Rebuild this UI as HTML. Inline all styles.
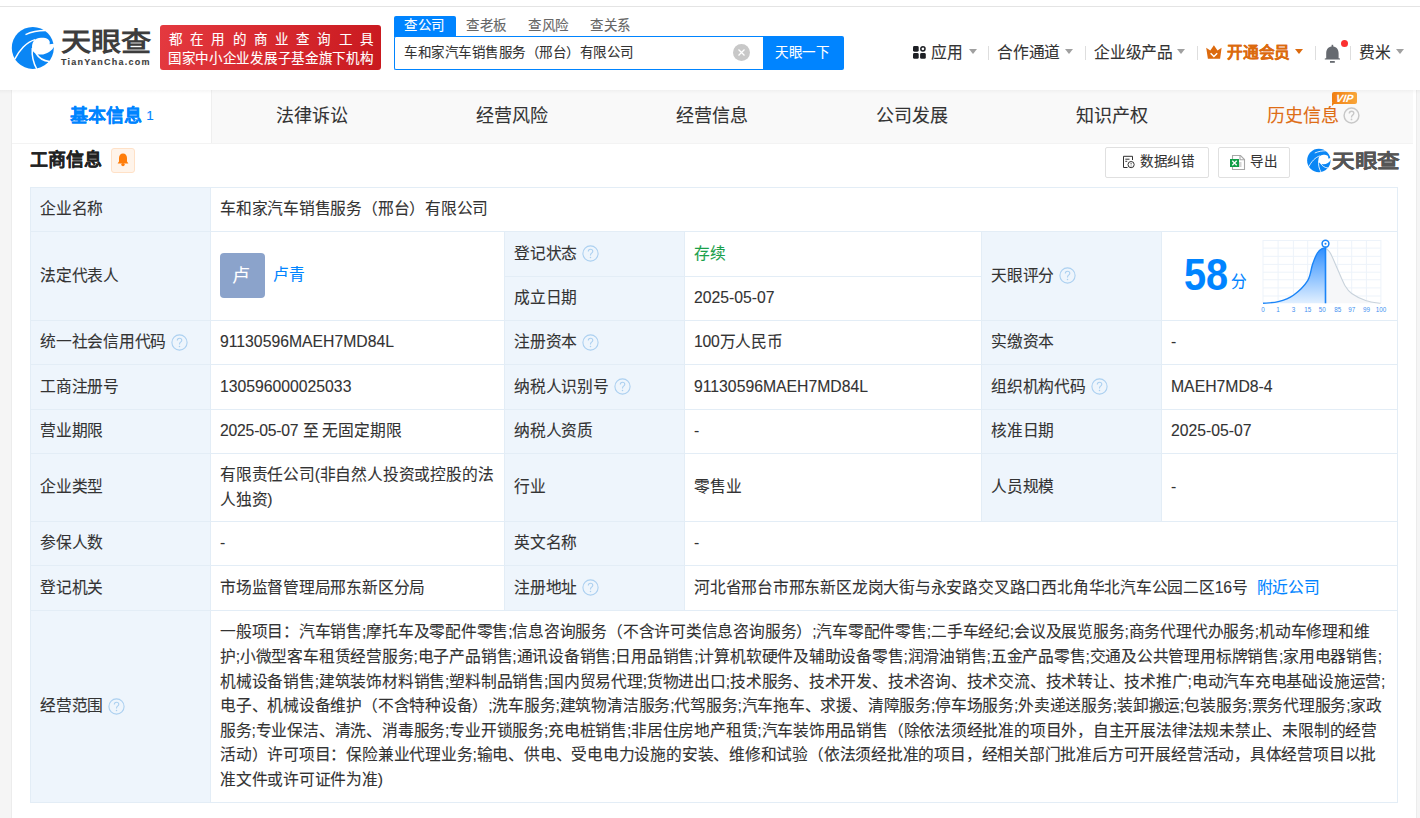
<!DOCTYPE html>
<html lang="zh-CN"><head><meta charset="utf-8">
<style>
*{margin:0;padding:0;box-sizing:border-box}
html,body{width:1420px;height:818px;overflow:hidden}
body{-webkit-text-stroke:0.1px currentColor;background:#f5f5f5;font-family:"Liberation Sans",sans-serif;color:#333;position:relative}
.a{position:absolute}
.nw{white-space:nowrap}
#hdr{left:0;top:0;width:1420px;height:90px;background:#fff}
#topline{left:0;top:6px;width:1420px;height:1px;background:#e4e4e4}
#card{left:12px;top:90px;width:1404px;height:728px;background:#fff}
#tabs{left:12px;top:90px;width:1401px;height:54px;background:#f9f9f9;border-bottom:1px solid #f3f3f3}
.tab{top:90px;height:53px;width:200px;text-align:center;font-size:18px;line-height:53px;color:#333;white-space:nowrap}
.nav{font-size:15.75px;letter-spacing:-0.25px;color:#333;line-height:20px;top:43px;white-space:nowrap}
.tri{width:0;height:0;border-left:4.5px solid transparent;border-right:4.5px solid transparent;border-top:5px solid #a0a0a0}
.sep{width:1px;height:14px;background:#dedede;top:46px}
.lb{background:#eef5fc}
.c{position:absolute;display:flex;align-items:center;padding-left:10px;font-size:15.75px;line-height:24.6px;letter-spacing:-0.22px;color:#333;white-space:nowrap}
.hl{position:absolute;height:1px;background:#e3edf6}
.vl{position:absolute;width:1px;background:#e3edf6}
.q{width:17px;height:17px;margin-left:5px;flex:none;color:#acd0f0;position:relative;top:-0.5px}
</style></head><body>
<svg width="0" height="0" style="position:absolute">
 <defs>
  <symbol id="qi" viewBox="0 0 17 17">
   <circle cx="8.5" cy="8.5" r="7.6" fill="none" stroke="currentColor" stroke-width="1.1"/>
   <path d="M6.3 6.6 C6.3 5.1 7.3 4.3 8.5 4.3 C9.8 4.3 10.8 5.1 10.8 6.3 C10.8 7.5 9.9 7.9 9.2 8.5 C8.7 8.9 8.5 9.3 8.5 10.4" fill="none" stroke="currentColor" stroke-width="1.1"/>
   <circle cx="8.5" cy="12.4" r="0.75" fill="currentColor"/>
  </symbol>
  <symbol id="qi2" viewBox="0 0 17 17">
   <circle cx="8.5" cy="8.5" r="7.4" fill="none" stroke="currentColor" stroke-width="1.5"/>
   <path d="M6.3 6.6 C6.3 5.1 7.3 4.3 8.5 4.3 C9.8 4.3 10.8 5.1 10.8 6.3 C10.8 7.5 9.9 7.9 9.2 8.5 C8.7 8.9 8.5 9.3 8.5 10.4" fill="none" stroke="currentColor" stroke-width="1.4"/>
   <circle cx="8.5" cy="12.4" r="0.9" fill="currentColor"/>
  </symbol>
  <symbol id="logo" viewBox="0 0 52 52">
   <circle cx="24.8" cy="25.9" r="21" fill="#0a86f5"/>
   <path d="M17.5 12.6 C24 9.6 31 8.6 37.5 8.6" stroke="#fff" stroke-width="1.5" fill="none"/>
   <path d="M41.6 22.2 C42.8 17.5 38.5 15.6 33 15.8 C27 16 24 19.5 24 25 C24 30.5 28 32.8 33 32.6 C39 32.4 44 29 46.5 24 L47.5 21.6 L41.6 22.2 Z" fill="#fff"/>
   <path d="M6.8 37.2 C11 28.5 18.5 20 27 17.6" stroke="#fff" stroke-width="1.5" fill="none"/>
   <path d="M24.3 26 C23.6 34 25.3 41 29 47.5" stroke="#fff" stroke-width="1.5" fill="none"/>
   <path d="M27.8 31 C30.8 36 35.5 39 41.5 39.5" stroke="#fff" stroke-width="1.5" fill="none"/>
  </symbol>
 </defs>
</svg>
<div class="a" id="hdr"></div>
<div class="a" id="topline"></div>

<!-- logo -->
<svg class="a" style="left:8px;top:22px" width="52" height="52"><use href="#logo"/></svg>
<div class="a nw" style="left:61px;top:26px;font-size:26px;font-weight:bold;color:#3d3d3d;line-height:32px;-webkit-text-stroke:0;transform:scaleX(1.16);transform-origin:0 0">天眼查</div>
<div class="a nw" style="left:61px;top:56px;font-size:9px;font-weight:bold;color:#3d3d3d;line-height:12px;letter-spacing:1.25px">TianYanCha.com</div>

<!-- red banner -->
<div class="a" style="left:160px;top:25px;width:221px;height:45px;border-radius:3px;background:linear-gradient(100deg,#e4393f,#c9191f)"></div>
<div class="a nw" style="left:169px;top:31px;font-size:13.5px;color:#fff;line-height:18px;letter-spacing:8.2px">都在用的商业查询工具</div>
<div class="a nw" style="left:168px;top:50px;font-size:13.5px;letter-spacing:0.7px;color:#fff;line-height:18px">国家中小企业发展子基金旗下机构</div>

<!-- search -->
<div class="a" style="left:394px;top:16px;width:62px;height:21px;background:#0084ff;border-radius:2px 2px 0 0"></div>
<div class="a nw" style="left:404px;top:16px;font-size:13.5px;letter-spacing:0.5px;color:#fff;line-height:20px">查公司</div>
<div class="a nw" style="left:466px;top:16px;font-size:13.5px;letter-spacing:0.5px;color:#666;line-height:20px">查老板</div>
<div class="a nw" style="left:528px;top:16px;font-size:13.5px;letter-spacing:0.5px;color:#666;line-height:20px">查风险</div>
<div class="a nw" style="left:590px;top:16px;font-size:13.5px;letter-spacing:0.5px;color:#666;line-height:20px">查关系</div>
<div class="a" style="left:394px;top:36px;width:370px;height:34px;border:1px solid #0084ff;border-right:none;background:#fff;border-radius:2px 0 0 2px"></div>
<div class="a nw" style="left:404px;top:43px;font-size:13.5px;letter-spacing:0.5px;color:#333;line-height:20px">车和家汽车销售服务（邢台）有限公司</div>
<div class="a" style="left:733px;top:44px;width:17px;height:17px;border-radius:50%;background:#c8c8c8"></div>
<svg class="a" style="left:733px;top:44px" width="17" height="17"><path d="M5.5 5.5 L11.5 11.5 M11.5 5.5 L5.5 11.5" stroke="#fff" stroke-width="1.3"/></svg>
<div class="a" style="left:763px;top:36px;width:81px;height:34px;background:#0084ff;border-radius:0 2px 2px 0"></div>
<div class="a nw" style="left:775px;top:43px;font-size:13.5px;letter-spacing:0.5px;color:#fff;line-height:20px">天眼一下</div>

<!-- right nav -->
<svg class="a" style="left:913px;top:46px" width="14" height="14" viewBox="0 0 14 14">
  <rect x="0" y="0" width="5.7" height="5.7" rx="1.4" fill="#1d1f24"/>
  <circle cx="9.9" cy="2.85" r="2.1" stroke="#1d1f24" stroke-width="1.5" fill="none"/>
  <rect x="0" y="7.1" width="5.7" height="5.7" rx="1.4" fill="#1d1f24"/>
  <rect x="7.1" y="7.1" width="5.7" height="5.7" rx="1.4" fill="#1d1f24"/>
</svg>
<div class="a nav" style="left:931px">应用</div>
<div class="a tri" style="left:969px;top:49px"></div>
<div class="a sep" style="left:988px"></div>
<div class="a nav" style="left:997px">合作通道</div>
<div class="a tri" style="left:1065px;top:49px"></div>
<div class="a sep" style="left:1085px"></div>
<div class="a nav" style="left:1094px">企业级产品</div>
<div class="a tri" style="left:1177px;top:49px"></div>
<div class="a sep" style="left:1197px"></div>
<svg class="a" style="left:1206px;top:45px" width="17" height="15" viewBox="0 0 17 15">
  <path d="M0.2 2.8 L4.3 5.6 L7.9 0.3 L11.5 5.6 L15.6 2.8 L14.1 13.8 L1.9 13.8 Z" fill="#dc6a0e"/>
  <path d="M4.6 8.3 L7.9 11.5 L11.2 8.3" stroke="#fff" stroke-width="1.5" fill="none"/>
</svg>
<div class="a nav" style="left:1227px;color:#dc6a0e;font-weight:bold">开通会员</div>
<div class="a tri" style="left:1295px;top:49px;border-top-color:#dc6a0e"></div>
<div class="a sep" style="left:1315px"></div>
<svg class="a" style="left:1324px;top:44px" width="17" height="20" viewBox="0 0 17 20">
  <rect x="7.6" y="0.8" width="1.6" height="2.5" fill="#666a70"/>
  <path d="M8.4 2.6 C4.6 2.6 2.2 5.2 2.2 9.3 L2.2 14.2 L0.8 14.4 L0.8 15.4 L16 15.4 L16 14.4 L14.6 14.2 L14.6 9.3 C14.6 5.2 12.2 2.6 8.4 2.6 Z" fill="#666a70"/>
  <rect x="6" y="17" width="4.8" height="1.8" fill="#666a70"/>
</svg>
<div class="a" style="left:1341px;top:40px;width:7px;height:7px;border-radius:50%;background:#fb3030"></div>
<div class="a sep" style="left:1350px"></div>
<div class="a nav" style="left:1359px">费米</div>
<div class="a tri" style="left:1396px;top:49px"></div>

<!-- card & tabs -->
<div class="a" id="card"></div>
<div class="a" id="tabs"></div>
<div class="a" style="left:11px;top:90px;width:1px;height:728px;background:#ececec"></div>
<div class="a" style="left:1416px;top:90px;width:1px;height:728px;background:#ececec"></div>
<div class="a" style="left:12px;top:90px;width:199px;height:53px;background:#fff"></div>
<div class="a" style="left:211px;top:90px;width:1px;height:53px;background:#efefef"></div>
<div class="a" style="left:0;top:90px;width:1420px;height:4px;background:linear-gradient(rgba(0,0,0,0.035),rgba(0,0,0,0))"></div>
<div class="a tab" style="left:12px;color:#0084ff;font-weight:bold">基本信息<span style="font-size:13.5px;font-weight:normal;margin-left:4px;position:relative;top:-2px">1</span></div>
<div class="a tab" style="left:212px">法律诉讼</div>
<div class="a tab" style="left:412px">经营风险</div>
<div class="a tab" style="left:612px">经营信息</div>
<div class="a tab" style="left:812px">公司发展</div>
<div class="a tab" style="left:1012px">知识产权</div>
<div class="a nw" style="left:1267px;top:104px;font-size:18px;line-height:24px;color:#de6d16">历史信息</div>
<svg class="a" style="left:1343px;top:107px;color:#c8c8c8" width="17" height="17"><use href="#qi2"/></svg>
<div class="a" style="left:1332px;top:92px;width:25px;height:12px;border-radius:2px;background:linear-gradient(90deg,#f07f12,#f9a63a)"></div>
<div class="a" style="left:1332px;top:103px;width:0;height:0;border-top:3px solid #f07f12;border-right:3px solid transparent"></div>
<div class="a nw" style="left:1336px;top:91px;font-size:10.5px;font-style:italic;font-weight:bold;color:#fff;line-height:14px;letter-spacing:0.2px;transform:skewX(-8deg)">VIP</div>

<!-- section title -->
<div class="a nw" style="left:30px;top:148px;font-size:18px;font-weight:bold;color:#222;line-height:24px">工商信息</div>
<div class="a" style="left:111px;top:148px;width:24px;height:25px;border-radius:3px;background:#fff4ea;border:1px solid #ffe1c7"></div>
<svg class="a" style="left:116px;top:152px" width="14" height="15" viewBox="0 0 14 15">
  <path d="M7 1.5 C4.6 1.5 3 3.4 3 6 L3 9.6 L1.6 11.6 L12.4 11.6 L11 9.6 L11 6 C11 3.4 9.4 1.5 7 1.5 Z" fill="#ff7d0a"/>
  <circle cx="7" cy="12.6" r="1.7" fill="#ff7d0a"/>
</svg>

<div class="a" style="left:1105px;top:147px;width:104px;height:31px;border:1px solid #e0e0e0;border-radius:2px;background:#fff"></div>
<svg class="a" style="left:1122px;top:155px" width="14" height="14" viewBox="0 0 14 14">
  <path d="M5.5 12.5 L1.5 12.5 L1.5 1.3 L10.5 1.3 L10.5 5" stroke="#333" stroke-width="1" fill="none"/>
  <path d="M3.3 4.2 L7.5 4.2 M3.3 6.3 L5.2 6.3" stroke="#333" stroke-width="1"/>
  <circle cx="9.1" cy="9.6" r="3.1" stroke="#333" stroke-width="1" fill="#fff"/>
  <path d="M9.1 7.9 L9.1 9.4 M9.1 10.6 L9.1 11.4" stroke="#333" stroke-width="0.9"/>
</svg>
<div class="a nw" style="left:1140px;top:152px;font-size:13.5px;letter-spacing:0.5px;line-height:20px;color:#333">数据纠错</div>
<div class="a" style="left:1218px;top:147px;width:72px;height:31px;border:1px solid #e0e0e0;border-radius:2px;background:#fff"></div>
<svg class="a" style="left:1229px;top:154px" width="17" height="17" viewBox="0 0 17 17">
  <path d="M3.5 1.5 L11.5 1.5 L15.5 5.5 L15.5 15.5 L3.5 15.5 Z" fill="#fff" stroke="#a8a8a8" stroke-width="1.1"/>
  <path d="M11 1.5 L11 5.8 L15.5 5.8" fill="none" stroke="#a8a8a8" stroke-width="1.1"/>
  <rect x="10" y="8" width="2.5" height="5" fill="#d4d4d4"/>
  <rect x="1" y="5" width="9" height="8" fill="#0f9d46"/>
  <path d="M3.3 6.8 L7.7 11.2 M7.7 6.8 L3.3 11.2" stroke="#fff" stroke-width="1.3"/>
</svg>
<div class="a nw" style="left:1250px;top:152px;font-size:13.5px;letter-spacing:0.5px;line-height:20px;color:#333">导出</div>
<svg class="a" style="left:1305px;top:146px" width="29" height="29" viewBox="0 0 52 52"><use href="#logo"/></svg>
<div class="a nw" style="left:1332px;top:149px;font-size:19px;font-weight:bold;color:#555;line-height:26px;transform:scaleX(1.19);transform-origin:0 0">天眼查</div>

<!-- TABLE -->
<div class="a lb" style="left:30px;top:187px;width:180px;height:615px"></div>
<div class="a lb" style="left:504px;top:231px;width:180px;height:379px"></div>
<div class="a lb" style="left:981px;top:231px;width:180px;height:290px"></div>

<div class="hl" style="left:30px;top:187px;width:1368px"></div>
<div class="hl" style="left:30px;top:231px;width:1368px"></div>
<div class="hl" style="left:504px;top:276px;width:477px"></div>
<div class="hl" style="left:30px;top:320px;width:1368px"></div>
<div class="hl" style="left:30px;top:364px;width:1368px"></div>
<div class="hl" style="left:30px;top:409px;width:1368px"></div>
<div class="hl" style="left:30px;top:453px;width:1368px"></div>
<div class="hl" style="left:30px;top:521px;width:1368px"></div>
<div class="hl" style="left:30px;top:565px;width:1368px"></div>
<div class="hl" style="left:30px;top:610px;width:1368px"></div>
<div class="hl" style="left:30px;top:802px;width:1368px"></div>
<div class="vl" style="left:30px;top:187px;height:616px"></div>
<div class="vl" style="left:210px;top:187px;height:616px"></div>
<div class="vl" style="left:504px;top:231px;height:379px"></div>
<div class="vl" style="left:684px;top:231px;height:379px"></div>
<div class="vl" style="left:981px;top:231px;height:290px"></div>
<div class="vl" style="left:1161px;top:231px;height:290px"></div>
<div class="vl" style="left:1397px;top:187px;height:616px"></div>

<div style="color:#acd0f0">
<!-- row1 -->
<div class="c" style="left:30px;top:187px;width:180px;height:45px">企业名称</div>
<div class="c" style="left:210px;top:187px;width:1187px;height:45px">车和家汽车销售服务（邢台）有限公司</div>
<!-- row2 -->
<div class="c" style="left:30px;top:231px;width:180px;height:90px">法定代表人</div>
<div class="a" style="left:220px;top:253px;width:45px;height:45px;border-radius:4px;background:#8ba3cb;color:#fff;font-size:18px;line-height:47px;text-align:center;text-indent:-3px">卢</div>
<div class="a nw" style="left:273px;top:263px;font-size:15.75px;letter-spacing:-0.25px;line-height:24px;color:#0084ff">卢青</div>
<div class="c" style="left:504px;top:231px;width:180px;height:46px">登记状态<svg class="q"><use href="#qi"/></svg></div>
<div class="c" style="left:684px;top:231px;width:297px;height:46px;color:#1aa04a">存续</div>
<div class="c" style="left:504px;top:276px;width:180px;height:45px">成立日期</div>
<div class="c" style="left:684px;top:276px;width:297px;height:45px;letter-spacing:0">2025-05-07</div>
<div class="c" style="left:981px;top:231px;width:180px;height:90px">天眼评分<svg class="q"><use href="#qi"/></svg></div>
<!-- row3 -->
<div class="c" style="left:30px;top:320px;width:180px;height:45px">统一社会信用代码<svg class="q"><use href="#qi"/></svg></div>
<div class="c" style="left:210px;top:320px;width:294px;height:45px;letter-spacing:0">91130596MAEH7MD84L</div>
<div class="c" style="left:504px;top:320px;width:180px;height:45px">注册资本<svg class="q"><use href="#qi"/></svg></div>
<div class="c" style="left:684px;top:320px;width:297px;height:45px">100万人民币</div>
<div class="c" style="left:981px;top:320px;width:180px;height:45px">实缴资本</div>
<div class="c" style="left:1161px;top:320px;width:236px;height:45px">-</div>
<!-- row4 -->
<div class="c" style="left:30px;top:364px;width:180px;height:46px">工商注册号</div>
<div class="c" style="left:210px;top:364px;width:294px;height:46px;letter-spacing:0">130596000025033</div>
<div class="c" style="left:504px;top:364px;width:180px;height:46px">纳税人识别号<svg class="q"><use href="#qi"/></svg></div>
<div class="c" style="left:684px;top:364px;width:297px;height:46px;letter-spacing:0">91130596MAEH7MD84L</div>
<div class="c" style="left:981px;top:364px;width:180px;height:46px">组织机构代码<svg class="q"><use href="#qi"/></svg></div>
<div class="c" style="left:1161px;top:364px;width:236px;height:46px;letter-spacing:0">MAEH7MD8-4</div>
<!-- row5 -->
<div class="c" style="left:30px;top:409px;width:180px;height:45px">营业期限</div>
<div class="c" style="left:210px;top:409px;width:294px;height:45px">2025-05-07 至 无固定期限</div>
<div class="c" style="left:504px;top:409px;width:180px;height:45px">纳税人资质</div>
<div class="c" style="left:684px;top:409px;width:297px;height:45px">-</div>
<div class="c" style="left:981px;top:409px;width:180px;height:45px">核准日期</div>
<div class="c" style="left:1161px;top:409px;width:236px;height:45px;letter-spacing:0">2025-05-07</div>
<!-- row6 -->
<div class="c" style="left:30px;top:453px;width:180px;height:69px">企业类型</div>
<div class="c" style="left:210px;top:453px;width:294px;height:69px"><div>有限责任公司(非自然人投资或控股的法<br>人独资)</div></div>
<div class="c" style="left:504px;top:453px;width:180px;height:69px">行业</div>
<div class="c" style="left:684px;top:453px;width:297px;height:69px">零售业</div>
<div class="c" style="left:981px;top:453px;width:180px;height:69px">人员规模</div>
<div class="c" style="left:1161px;top:453px;width:236px;height:69px">-</div>
<!-- row7 -->
<div class="c" style="left:30px;top:521px;width:180px;height:45px">参保人数</div>
<div class="c" style="left:210px;top:521px;width:294px;height:45px">-</div>
<div class="c" style="left:504px;top:521px;width:180px;height:45px">英文名称</div>
<div class="c" style="left:684px;top:521px;width:713px;height:45px">-</div>
<!-- row8 -->
<div class="c" style="left:30px;top:565px;width:180px;height:46px">登记机关</div>
<div class="c" style="left:210px;top:565px;width:294px;height:46px">市场监督管理局邢东新区分局</div>
<div class="c" style="left:504px;top:565px;width:180px;height:46px">注册地址<svg class="q"><use href="#qi"/></svg></div>
<div class="c" style="left:684px;top:565px;width:713px;height:46px">河北省邢台市邢东新区龙岗大街与永安路交叉路口西北角华北汽车公园二区16号<span style="color:#0084ff;margin-left:9px">附近公司</span></div>
<!-- row9 -->
<div class="c" style="left:30px;top:610px;width:180px;height:193px">经营范围<svg class="q"><use href="#qi"/></svg></div>
<div class="c" style="left:210px;top:610px;width:1187px;height:193px"><div>一般项目：汽车销售;摩托车及零配件零售;信息咨询服务（不含许可类信息咨询服务）;汽车零配件零售;二手车经纪;会议及展览服务;商务代理代办服务;机动车修理和维<br>护;小微型客车租赁经营服务;电子产品销售;通讯设备销售;日用品销售;计算机软硬件及辅助设备零售;润滑油销售;五金产品零售;交通及公共管理用标牌销售;家用电器销售;<br>机械设备销售;建筑装饰材料销售;塑料制品销售;国内贸易代理;货物进出口;技术服务、技术开发、技术咨询、技术交流、技术转让、技术推广;电动汽车充电基础设施运营;<br>电子、机械设备维护（不含特种设备）;洗车服务;建筑物清洁服务;代驾服务;汽车拖车、求援、清障服务;停车场服务;外卖递送服务;装卸搬运;包装服务;票务代理服务;家政<br>服务;专业保洁、清洗、消毒服务;专业开锁服务;充电桩销售;非居住房地产租赁;汽车装饰用品销售（除依法须经批准的项目外，自主开展法律法规未禁止、未限制的经营<br>活动）许可项目：保险兼业代理业务;输电、供电、受电电力设施的安装、维修和试验（依法须经批准的项目，经相关部门批准后方可开展经营活动，具体经营项目以批<br>准文件或许可证件为准)</div></div>
</div>

<!-- score -->
<div class="a nw" style="left:1184px;top:250px;font-size:41.5px;font-weight:bold;color:#0084ff;line-height:46px;transform:scale(0.955,1.07);transform-origin:0 0">58</div>
<div class="a nw" style="left:1231px;top:272px;font-size:15.75px;color:#0084ff;line-height:20px">分</div>
<svg class="a" style="left:1255px;top:236px" width="140" height="80" viewBox="0 0 140 80">
 <defs>
  <linearGradient id="gf" x1="0" y1="0" x2="0" y2="1">
   <stop offset="0" stop-color="#2f8fff"/>
   <stop offset="1" stop-color="#e2f0ff"/>
  </linearGradient>
 </defs>
 <g stroke="#edf3fa" stroke-width="1">
  <path d="M8 4V67.3 M23.1 4V67.3 M38.4 4V67.3 M52.7 4V67.3 M67.3 4V67.3 M82.7 4V67.3 M96.7 4V67.3 M111.4 4V67.3 M125.9 4V67.3"/>
  <path d="M8 4.5H125.9 M8 12.1H125.9 M8 20.3H125.9 M8 28.4H125.9 M8 36.2H125.9 M8 43.8H125.9 M8 51.9H125.9 M8 60H125.9"/>
 </g>
 <path d="M70.5 12.2 C71.3 13.0 73.3 13.5 75.3 17.0 C77.3 20.5 80.2 27.9 82.6 33.3 C85.0 38.7 87.6 45.4 89.9 49.4 C92.3 53.4 93.1 54.9 96.7 57.5 C100.3 60.1 106.5 63.2 111.3 64.8 C116.1 66.4 123.2 66.9 125.6 67.3 L70.5 67.3 Z" fill="#f6f7f9"/>
 <path d="M70.5 12.2 C71.3 13.0 73.3 13.5 75.3 17.0 C77.3 20.5 80.2 27.9 82.6 33.3 C85.0 38.7 87.6 45.4 89.9 49.4 C92.3 53.4 93.1 54.9 96.7 57.5 C100.3 60.1 106.5 63.2 111.3 64.8 C116.1 66.4 123.2 66.9 125.6 67.3" fill="none" stroke="#c9d3dc" stroke-width="1.1"/>
 <path d="M8.0 67.3 C10.5 67.0 18.1 67.0 23.2 65.6 C28.3 64.3 33.5 62.7 38.4 59.2 C43.3 55.7 49.5 49.7 52.7 44.6 C55.9 39.5 55.9 33.0 57.5 28.4 C59.1 23.8 60.8 19.6 62.4 17.0 C64.0 14.4 65.9 13.4 67.3 12.6 C68.6 11.8 70.0 12.3 70.5 12.2 L70.5 67.3 Z" fill="url(#gf)"/>
 <path d="M8.0 67.3 C10.5 67.0 18.1 67.0 23.2 65.6 C28.3 64.3 33.5 62.7 38.4 59.2 C43.3 55.7 49.5 49.7 52.7 44.6 C55.9 39.5 55.9 33.0 57.5 28.4 C59.1 23.8 60.8 19.6 62.4 17.0 C64.0 14.4 65.9 13.4 67.3 12.6 C68.6 11.8 70.0 12.3 70.5 12.2" fill="none" stroke="#1a84f7" stroke-width="1.4"/>
 <path d="M70.5 8V67.3" stroke="#1a84f7" stroke-width="1.6"/>
 <circle cx="70.5" cy="7.7" r="3.4" fill="#fff" stroke="#1a84f7" stroke-width="1.5"/>
 <circle cx="70.5" cy="7.7" r="1" fill="#1a84f7"/>
 <g font-family="Liberation Sans" font-size="6.3" fill="#3f91f0" text-anchor="middle">
  <text x="8" y="76">0</text><text x="23.1" y="76">1</text><text x="38.4" y="76">3</text><text x="52.7" y="76">15</text><text x="67.3" y="76">50</text><text x="82.7" y="76">85</text><text x="96.7" y="76">97</text><text x="111.4" y="76">99</text><text x="125.9" y="76">100</text>
 </g>
</svg>
</body></html>
